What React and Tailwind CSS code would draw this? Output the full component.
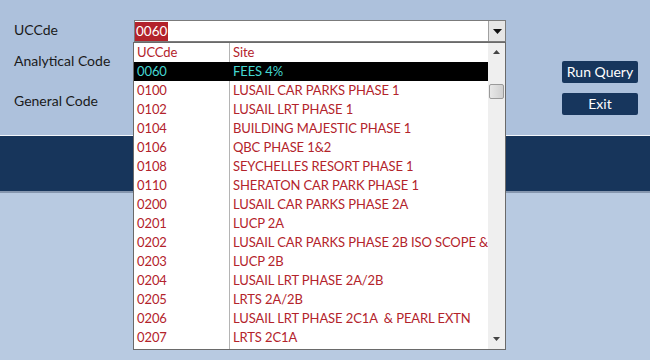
import React from "react";

const rows = [
  ["0060", "FEES 4%"],
  ["0100", "LUSAIL CAR PARKS PHASE 1"],
  ["0102", "LUSAIL LRT PHASE 1"],
  ["0104", "BUILDING MAJESTIC PHASE 1"],
  ["0106", "QBC PHASE 1&2"],
  ["0108", "SEYCHELLES RESORT PHASE 1"],
  ["0110", "SHERATON CAR PARK PHASE 1"],
  ["0200", "LUSAIL CAR PARKS PHASE 2A"],
  ["0201", "LUCP 2A"],
  ["0202", "LUSAIL CAR PARKS PHASE 2B ISO SCOPE &"],
  ["0203", "LUCP 2B"],
  ["0204", "LUSAIL LRT PHASE 2A/2B"],
  ["0205", "LRTS 2A/2B"],
  ["0206", "LUSAIL LRT PHASE 2C1A  & PEARL EXTN"],
  ["0207", "LRTS 2C1A"],
];

export default function App() {
  return (
    <div
      className="relative w-[650px] h-[360px] overflow-hidden text-[14px] text-[#1a1a1a]"
      style={{ fontFamily: "Lato, 'Open Sans', sans-serif" }}
    >
      <div className="flex h-[135px] bg-[#adc1dc]">
        <div className="flex flex-col pl-[14px] pt-[21px] w-[134px]">
          <div className="h-[18px] leading-[18px]">UCCde</div>
          <div className="h-[18px] leading-[18px] mt-[13px]">Analytical Code</div>
          <div className="h-[18px] leading-[18px] mt-[22px]">General Code</div>
        </div>
        <div className="pt-[20px]">
          <div className="flex w-[372px] h-[22px] border border-[#7b7b7b] bg-white">
            <div className="flex-1 flex items-center">
              <span className="bg-[#b3232b] text-white h-[19px] leading-[19px] px-[1px] text-[13.5px]">0060</span>
            </div>
            <div className="w-[17px] h-full border-l border-[#a0a0a0] bg-[#e6e6e6] flex items-center justify-center">
              <svg width="9" height="5" viewBox="0 0 9 5">
                <path d="M0 0 H9 L4.5 5 Z" fill="#111" />
              </svg>
            </div>
          </div>
        </div>
        <div className="flex flex-col pl-[56px] pt-[61px] gap-[10px]">
          <div className="w-[76px] h-[22px] rounded-[2px] bg-[#17365d] text-white flex items-center justify-center leading-none">
            Run Query
          </div>
          <div className="w-[76px] h-[22px] rounded-[2px] bg-[#17365d] text-white flex items-center justify-center leading-none">
            Exit
          </div>
        </div>
      </div>
      <div className="h-[1px] bg-[#f2f5fa]" />
      <div className="h-[55px] bg-[#17355b]" />
      <div className="h-[2px] bg-[#8596ae]" />
      <div className="h-[167px] bg-[#b8cae1]" />

      <div className="absolute left-[133px] top-[42px] w-[373px] h-[308px] border border-[#6a6a6a] bg-white flex text-[13px] tracking-[-0.1px]">
        <div className="relative flex-1 min-w-0 overflow-hidden flex flex-col">
          <div className="absolute left-[95px] top-0 bottom-0 w-[1px] bg-[#b4b4b4]" />
          <div className="flex h-[19px] leading-[19px] text-[#b3232b]">
            <div className="w-[96px] shrink-0 pl-[3px]">UCCde</div>
            <div className="pl-[3px]">Site</div>
          </div>
          {rows.map(([c, s], i) => (
            <div
              key={c}
              className={
                "relative flex h-[19px] leading-[19px] whitespace-pre " +
                (i === 0 ? "bg-black text-[#44d6d0]" : "text-[#b3232b]")
              }
            >
              <div className="w-[96px] shrink-0 pl-[3px]">{c}</div>
              <div className="pl-[3px]">{s}</div>
            </div>
          ))}
        </div>
        <div className="w-[17px] shrink-0 bg-[#efefef] relative">
          <svg className="absolute left-[5px] top-[7px]" width="7" height="4" viewBox="0 0 7 4">
            <path d="M0 4 H7 L3.5 0 Z" fill="#444" />
          </svg>
          <div className="absolute left-[1px] top-[41px] w-[15px] h-[15px] border border-[#9a9a9a] rounded-[2px] bg-gradient-to-r from-[#e8e8e8] to-[#d0d0d0]" />
          <svg className="absolute left-[5px] bottom-[8px]" width="7" height="4" viewBox="0 0 7 4">
            <path d="M0 0 H7 L3.5 4 Z" fill="#444" />
          </svg>
        </div>
      </div>
    </div>
  );
}
